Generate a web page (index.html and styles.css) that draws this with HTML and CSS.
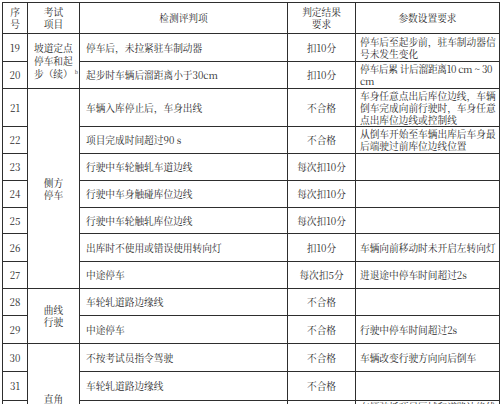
FILE: index.html
```html
<!DOCTYPE html>
<html lang="zh-CN">
<head>
<meta charset="utf-8">
<title>考试项目</title>
<link rel="stylesheet" href="styles.css">
</head>
<body>
<table class="sheet">
  <colgroup>
    <col class="c-no"><col class="c-item"><col class="c-check"><col class="c-result"><col class="c-param">
  </colgroup>
  <thead>
    <tr class="h-head">
      <th>序<br>号</th>
      <th>考试<br>项目</th>
      <th>检测评判项</th>
      <th>判定结果<br>要求</th>
      <th>参数设置要求</th>
    </tr>
  </thead>
  <tbody>
    <tr class="h28">
      <td class="no">19</td>
      <td class="item left" rowspan="2">坡道定点<br>停车和起<br>步（续）<sup>b</sup></td>
      <td class="check">停车后，未拉紧驻车制动器</td>
      <td class="res">扣10分</td>
      <td class="param">停车后至起步前，驻车制动器信号未发生变化</td>
    </tr>
    <tr class="h27">
      <td class="no">20</td>
      <td class="check">起步时车辆后溜距离小于30cm</td>
      <td class="res">扣10分</td>
      <td class="param tight">停车后累 计后溜距离10 cm ~ 30 cm</td>
    </tr>
    <tr class="h38">
      <td class="no">21</td>
      <td class="item" rowspan="7">侧方<br>停车</td>
      <td class="check">车辆入库停止后，车身出线</td>
      <td class="res">不合格</td>
      <td class="param">车身任意点出后库位边线，车辆倒车完成向前行驶时，车身任意点出库位边线或控制线</td>
    </tr>
    <tr class="h27">
      <td class="no">22</td>
      <td class="check">项目完成时间超过90 s</td>
      <td class="res">不合格</td>
      <td class="param">从倒车开始至车辆出库后车身最后端驶过前库位边线位置</td>
    </tr>
    <tr class="h27">
      <td class="no">23</td>
      <td class="check">行驶中车轮触轧车道边线</td>
      <td class="res">每次扣10分</td>
      <td class="param"></td>
    </tr>
    <tr class="h27">
      <td class="no">24</td>
      <td class="check">行驶中车身触碰库位边线</td>
      <td class="res">每次扣10分</td>
      <td class="param"></td>
    </tr>
    <tr class="h26">
      <td class="no">25</td>
      <td class="check">行驶中车轮触轧库位边线</td>
      <td class="res">每次扣10分</td>
      <td class="param"></td>
    </tr>
    <tr class="h28">
      <td class="no">26</td>
      <td class="check">出库时不使用或错误使用转向灯</td>
      <td class="res">扣10分</td>
      <td class="param">车辆向前移动时未开启左转向灯</td>
    </tr>
    <tr class="h27">
      <td class="no">27</td>
      <td class="check">中途停车</td>
      <td class="res">每次扣5分</td>
      <td class="param">进退途中停车时间超过2s</td>
    </tr>
    <tr class="h27">
      <td class="no">28</td>
      <td class="item" rowspan="2">曲线<br>行驶</td>
      <td class="check">车轮轧道路边缘线</td>
      <td class="res">不合格</td>
      <td class="param"></td>
    </tr>
    <tr class="h28">
      <td class="no">29</td>
      <td class="check">中途停车</td>
      <td class="res">不合格</td>
      <td class="param">行驶中停车时间超过2s</td>
    </tr>
    <tr class="h28">
      <td class="no">30</td>
      <td class="item" rowspan="4">直角<br>转弯</td>
      <td class="check">不按考试员指令驾驶</td>
      <td class="res">不合格</td>
      <td class="param">车辆改变行驶方向向后倒车</td>
    </tr>
    <tr class="h29">
      <td class="no">31</td>
      <td class="check">车轮轧道路边缘线</td>
      <td class="res">不合格</td>
      <td class="param"></td>
    </tr>
    <tr class="h38">
      <td class="no">32</td>
      <td class="check">转弯时不使用或错误使用转向灯</td>
      <td class="res">扣10分</td>
      <td class="param top">车辆驶抵项目区域和道路边缘线前，未开启转向灯</td>
    </tr>
    <tr class="h27">
      <td class="no">33</td>
      <td class="check">中途停车</td>
      <td class="res">扣5分</td>
      <td class="param">行驶中停车时间超过2s</td>
    </tr>
  </tbody>
</table>
</body>
</html>
```
FILE: styles.css
```css
html, body {
  margin: 0;
  padding: 0;
  background: #ffffff;
}

body {
  padding: 2px 0 0 2px;
  font-family: "Noto Serif CJK SC", "Noto Sans CJK SC", serif;
  color: #2b2b2b;
  overflow: hidden;
}

.sheet {
  border-collapse: collapse;
  table-layout: fixed;
  width: 497px;
  font-size: 9.7px;
  line-height: 12px;
}

.c-no { width: 25px; }
.c-item { width: 52px; }
.c-check { width: 208px; }
.c-result { width: 68px; }
.c-param { width: 144px; }

.sheet th,
.sheet td {
  border: 1px solid #2e2e2e;
  padding: 0;
  vertical-align: middle;
  font-weight: normal;
  overflow: hidden;
}

.sheet th {
  text-align: center;
}

.h-head { height: 31px; }
.h26 { height: 26px; }
.h27 { height: 27px; }
.h28 { height: 28px; }
.h29 { height: 29px; }
.h38 { height: 38px; }

.sheet .no {
  text-align: center;
}

.sheet .item {
  text-align: center;
}

.sheet .item.left {
  text-align: left;
  padding-left: 6px;
  line-height: 13px;
}

.item sup {
  font-size: 5px;
  line-height: 0;
  vertical-align: 4px;
  margin-left: 2px;
}

.sheet .check {
  text-align: left;
  padding-left: 6px;
}

.sheet .res {
  text-align: center;
}

.sheet .param {
  text-align: left;
  padding: 0 1px 0 4px;
}

.sheet .param.tight {
  letter-spacing: -0.3px;
  padding-right: 0;
}

.sheet .param.top {
  vertical-align: top;
}
```
